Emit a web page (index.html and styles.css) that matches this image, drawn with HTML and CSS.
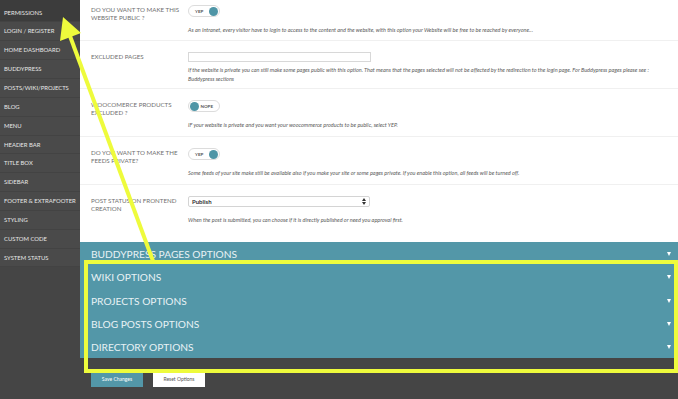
FILE: index.html
```html
<!DOCTYPE html>
<html>
<head>
<meta charset="utf-8">
<title>Theme Options - Permissions</title>
<link rel="stylesheet" href="styles.css">
</head>
<body>
<div class="page">
	<ul class="sidebar">
		<li class="current">Permissions</li>
		<li>Login / Register</li>
		<li>Home Dashboard</li>
		<li>Buddypress</li>
		<li>Posts/Wiki/Projects</li>
		<li>Blog</li>
		<li>Menu</li>
		<li>Header Bar</li>
		<li>Title Box</li>
		<li>Sidebar</li>
		<li>Footer &amp; Extrafooter</li>
		<li>Styling</li>
		<li>Custom Code</li>
		<li>System Status</li>
	</ul>

	<div class="main">
		<div class="options">
			<div class="row first">
				<div class="label">Do you want to make this website public ?</div>
				<div class="field">
					<div class="toggle on"><span>YEP</span><i></i></div>
					<p class="desc">As an Intranet, every visitor have to login to access to the content and the website, with this option your Website will be free to be reached by everyone...</p>
				</div>
			</div>
			<div class="row">
				<div class="label">Excluded pages</div>
				<div class="field">
					<div class="input"></div>
					<p class="desc tight">If the website is private you can still make some pages public with this option. That means that the pages selected will not be affected by the redirection to the login page. For Buddypress pages please see :<br>Buddypress sections</p>
				</div>
			</div>
			<div class="row">
				<div class="label">Woocomerce products excluded ?</div>
				<div class="field">
					<div class="toggle off"><i></i><span>NOPE</span></div>
					<p class="desc">IF your website is private and you want your woocommerce products to be public, select YEP.</p>
				</div>
			</div>
			<div class="row">
				<div class="label">Do you want to make the feeds private?</div>
				<div class="field">
					<div class="toggle on"><span>YEP</span><i></i></div>
					<p class="desc">Some feeds of your site make still be available also if you make your site or some pages private. If you enable this option, all feeds will be turned off.</p>
				</div>
			</div>
			<div class="row last">
				<div class="label">Post status on frontend creation</div>
				<div class="field">
					<div class="select">
						<span>Publish</span>
						<svg width="4" height="7" viewBox="0 0 4 7"><path d="M0 3 L2 0 L4 3 Z M0 4 L2 7 L4 4 Z" fill="#333"/></svg>
					</div>
					<p class="desc">When the post is submitted, you can choose if it is directly published or need you approval first.</p>
				</div>
			</div>
		</div>

		<div class="sections">
			<div class="section">Buddypress pages options<b></b></div>
			<div class="section">Wiki options<b></b></div>
			<div class="section">Projects options<b></b></div>
			<div class="section">Blog posts options<b></b></div>
			<div class="section">Directory options<b></b></div>
		</div>

		<div class="buttons">
			<div class="btn save">Save Changes</div>
			<div class="btn reset">Reset Options</div>
		</div>
	</div>
</div>

<!-- annotation drawn over the screenshot -->
<div class="highlight"></div>
<svg class="arrow" width="678" height="399" viewBox="0 0 678 399">
	<line x1="153" y1="261" x2="70" y2="36" stroke="#eefb3c" stroke-width="4"/>
	<polygon points="63,17 81,33 60,41" fill="#eefb3c"/>
</svg>
</body>
</html>
```

FILE: styles.css
```css
* {
	margin: 0;
	padding: 0;
	box-sizing: border-box;
}

body {
	background: #454545;
	font-family: Lato, "Open Sans", sans-serif;
	width: 678px;
	height: 399px;
	overflow: hidden;
	position: relative;
}

.page {
	display: grid;
	grid-template-columns: 80px 1fr;
	align-items: start;
}

/* left menu */
.sidebar {
	list-style: none;
	background: #4a4a4a;
	padding-top: 3.6px;
}

.sidebar li {
	height: 18.85px;
	line-height: 18.85px;
	padding-left: 4px;
	font-size: 5.9px;
	text-transform: uppercase;
	color: #e6e6e6;
	border-bottom: 1px solid #434343;
	white-space: nowrap;
}

.sidebar li.current {
	background: #3c3c3c;
	margin-top: -3.6px;
	padding-top: 3.6px;
	height: 22.45px;
}

/* options panel */
.options {
	background: #fff;
}

.row {
	display: grid;
	grid-template-columns: 97px 1fr;
	padding: 11px 0 0 11px;
	height: 48px;
	border-bottom: 1px solid #f0f0f0;
}

.row.first {
	padding-top: 5px;
	height: 41px;
}

.row.last {
	height: 57px;
	border-bottom: none;
}

.label {
	font-size: 6.2px;
	line-height: 8px;
	color: #707070;
	text-transform: uppercase;
	padding-top: 1px;
}

.desc {
	margin-top: 8.5px;
	font-size: 5.5px;
	line-height: 9px;
	font-style: italic;
	color: #5a5a5a;
	width: 480px;
}

.desc.tight {
	margin-top: 4px;
}

.toggle {
	width: 32px;
	height: 12px;
	border: 1px solid #dcdcdc;
	border-radius: 6px;
	display: flex;
	align-items: center;
	justify-content: space-between;
	padding: 0 1px 0 6px;
	background: #fff;
}

.toggle.off {
	padding: 0 6px 0 1px;
}

.toggle span {
	font-size: 4.5px;
	font-weight: bold;
	color: #555;
}

.toggle i {
	width: 9px;
	height: 9px;
	border-radius: 50%;
	background: #4f95a6;
}

.input {
	width: 183px;
	height: 10px;
	border: 1px solid #d8d8d8;
}

.select {
	width: 182px;
	height: 11px;
	border: 1px solid #d4d4d4;
	border-radius: 2px;
	display: flex;
	align-items: center;
	justify-content: space-between;
	padding: 0 3px 0 3px;
}

.select span {
	font-size: 6px;
	font-weight: bold;
	color: #333;
}

/* collapsed sections */
.sections {
	background: #5397a8;
}

.section {
	height: 23.3px;
	padding-left: 11px;
	padding-top: 1px;
	font-size: 10.2px;
	color: #e8f2f5;
	text-transform: uppercase;
	display: flex;
	align-items: center;
	justify-content: space-between;
	padding-right: 7px;
}

.section b {
	width: 0;
	height: 0;
	border-left: 2.5px solid transparent;
	border-right: 2.5px solid transparent;
	border-top: 4px solid #fff;
}

.buttons {
	display: flex;
	gap: 10px;
	padding: 14px 0 0 11px;
}

.btn {
	width: 52px;
	height: 15px;
	line-height: 15px;
	text-align: center;
	font-size: 5px;
}

.btn.save {
	background: #5397a8;
	color: #fff;
}

.btn.reset {
	background: #fff;
	color: #555;
}

/* yellow annotation */
.highlight {
	position: absolute;
	left: 84px;
	top: 260px;
	width: 594px;
	height: 113px;
	border: 4px solid #eefb3c;
}

.arrow {
	position: absolute;
	left: 0;
	top: 0;
	pointer-events: none;
}
```
